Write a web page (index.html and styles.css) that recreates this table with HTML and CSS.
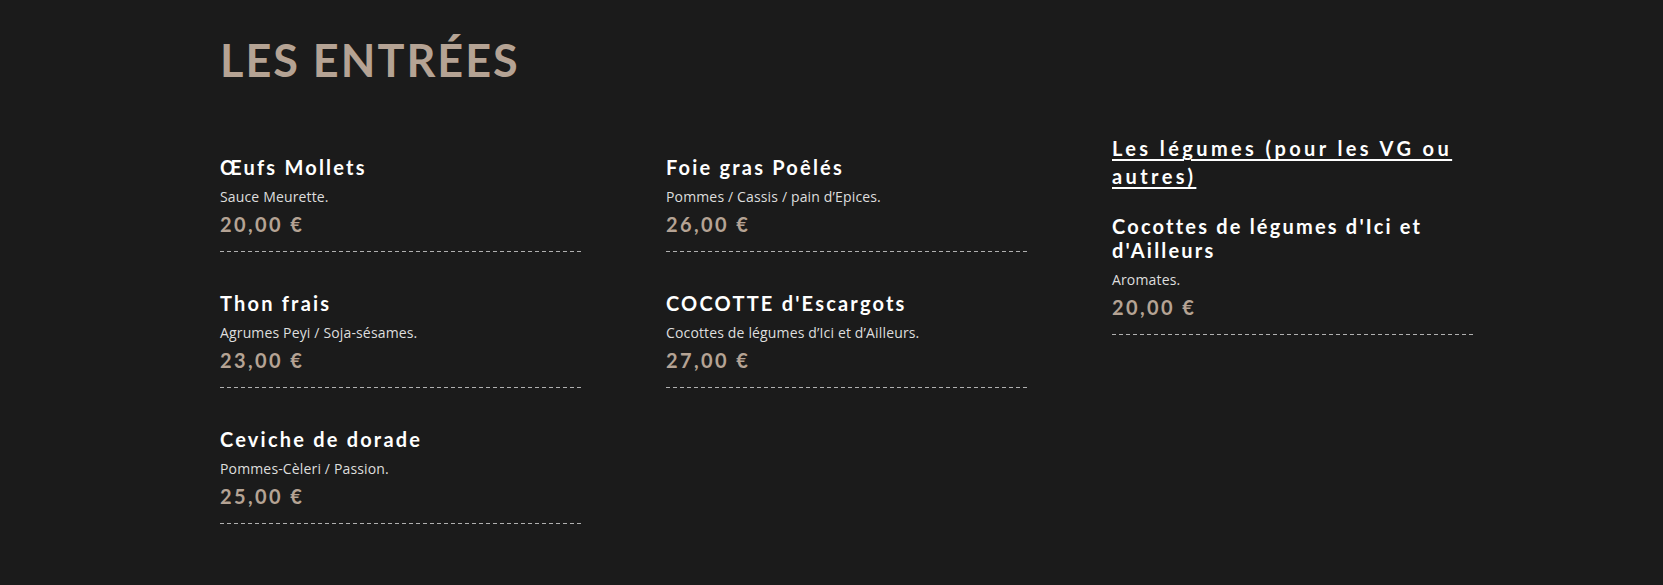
FILE: index.html
```html
<!DOCTYPE html>
<html lang="fr">
<head>
<meta charset="utf-8">
<title>Les entrées</title>
<link rel="stylesheet" href="styles.css">
</head>
<body>
<section class="menu">
  <h1 class="menu__title">LES ENTRÉES</h1>
  <div class="menu__grid">
    <div class="menu__col menu__col--offset">
      <div class="dish">
        <h3 class="dish__name">Œufs Mollets</h3>
        <p class="dish__desc">Sauce Meurette.</p>
        <p class="dish__price">20,00 €</p>
      </div>
      <div class="dish">
        <h3 class="dish__name">Thon frais</h3>
        <p class="dish__desc">Agrumes Peyi / Soja-sésames.</p>
        <p class="dish__price">23,00 €</p>
      </div>
      <div class="dish">
        <h3 class="dish__name">Ceviche de dorade</h3>
        <p class="dish__desc">Pommes-Cèleri / Passion.</p>
        <p class="dish__price">25,00 €</p>
      </div>
    </div>
    <div class="menu__col menu__col--offset">
      <div class="dish">
        <h3 class="dish__name">Foie gras Poêlés</h3>
        <p class="dish__desc">Pommes / Cassis / pain d’Epices.</p>
        <p class="dish__price">26,00 €</p>
      </div>
      <div class="dish">
        <h3 class="dish__name">COCOTTE d'Escargots</h3>
        <p class="dish__desc">Cocottes de légumes d’Ici et d’Ailleurs.</p>
        <p class="dish__price">27,00 €</p>
      </div>
    </div>
    <div class="menu__col">
      <h2 class="menu__subtitle">Les légumes (pour les VG ou autres)</h2>
      <div class="dish">
        <h3 class="dish__name">Cocottes de légumes d'Ici et d'Ailleurs</h3>
        <p class="dish__desc">Aromates.</p>
        <p class="dish__price">20,00 €</p>
      </div>
    </div>
  </div>
</section>
</body>
</html>
```

FILE: styles.css
```css
html, body {
  margin: 0;
  padding: 0;
}

body {
  background: #1b1b1b;
  color: #ffffff;
  font-family: "Lato", "Open Sans", sans-serif;
}

.menu {
  padding: 33px 0 40px 220px;
}

.menu__title {
  margin: 0;
  font-family: "Lato", sans-serif;
  font-weight: 700;
  font-size: 45px;
  line-height: 54px;
  letter-spacing: 2px;
  color: #b5a394;
}

.menu__grid {
  margin-top: 47px;
  display: grid;
  grid-template-columns: 361px 361px 361px;
  column-gap: 85px;
  align-items: start;
}

.menu__col--offset {
  padding-top: 21px;
}

.menu__subtitle {
  margin: 0 0 24px;
  font-family: "Lato", sans-serif;
  font-weight: 700;
  font-size: 20px;
  line-height: 28px;
  letter-spacing: 3.4px;
  color: #ffffff;
  text-decoration: underline;
  text-decoration-thickness: 2px;
  text-underline-offset: 3px;
}

.dish {
  padding-bottom: 16px;
  margin-bottom: 39px;
  background-image: linear-gradient(to right, #b0b0b0 4px, transparent 4px);
  background-size: 7px 1px;
  background-repeat: repeat-x;
  background-position: left bottom;
}

.dish__name {
  margin: 0;
  font-family: "Lato", sans-serif;
  font-weight: 700;
  font-size: 20px;
  line-height: 24px;
  letter-spacing: 2.2px;
  color: #ffffff;
}

.dish__desc {
  margin: 8px 0 0;
  font-family: "Open Sans", sans-serif;
  font-size: 14px;
  line-height: 20px;
  letter-spacing: 0.15px;
  color: #dedede;
}

.dish__price {
  margin: 5px 0 0;
  font-family: "Lato", sans-serif;
  font-weight: 700;
  font-size: 20px;
  line-height: 24px;
  letter-spacing: 2.4px;
  color: #b5a394;
}
```
